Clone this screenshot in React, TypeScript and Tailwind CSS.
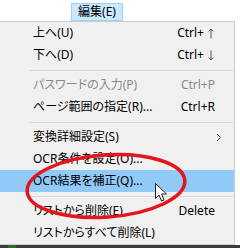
import React from "react";

type Item =
  | { kind: "sep" }
  | { kind: "item"; label: string; shortcut?: string; arrow?: "up" | "down"; disabled?: boolean; sub?: boolean; active?: boolean };

const items: Item[] = [
  { kind: "item", label: "上へ(U)", shortcut: "Ctrl+", arrow: "up" },
  { kind: "item", label: "下へ(D)", shortcut: "Ctrl+", arrow: "down" },
  { kind: "sep" },
  { kind: "item", label: "パスワードの入力(P)", shortcut: "Ctrl+P", disabled: true },
  { kind: "item", label: "ページ範囲の指定(R)...", shortcut: "Ctrl+R" },
  { kind: "sep" },
  { kind: "item", label: "変換詳細設定(S)", sub: true },
  { kind: "item", label: "OCR条件を設定(O)..." },
  { kind: "item", label: "OCR結果を補正(Q)...", active: true },
  { kind: "sep" },
  { kind: "item", label: "リストから削除(E)", shortcut: "Delete" },
  { kind: "item", label: "リストからすべて削除(L)" },
];

function Arrow({ dir }: { dir: "up" | "down" }) {
  return (
    <svg width="6" height="11" viewBox="0 0 6 11" className="ml-[4px] mr-[1px]">
      {dir === "up" ? (
        <path d="M3 1 L3 10.5 M0.8 3.5 L3 1 L5.2 3.5" stroke="#555" strokeWidth="1" fill="none" />
      ) : (
        <path d="M3 0.5 L3 10 M0.8 7.5 L3 10 L5.2 7.5" stroke="#555" strokeWidth="1" fill="none" />
      )}
    </svg>
  );
}

export default function App() {
  return (
    <div
      className="relative w-[240px] h-[248px] overflow-hidden bg-white text-[12px] leading-none text-black [font-feature-settings:'palt']"
      style={{ fontFamily: '"Noto Sans", "Noto Sans CJK JP", sans-serif' }}
    >
      <div className="h-[21px] flex items-start">
        <div className="ml-[71px] mt-[3px] w-[52px] h-[18px] border border-[#99d1ff] bg-[#cce8ff] flex items-center justify-center">
          編集(E)
        </div>
      </div>
      <div className="w-[235px] bg-[#f0f0f0] border-t border-r border-b border-[#cccccc] flex flex-col">
        {items.map((it, i) =>
          it.kind === "sep" ? (
            <div key={i} className="h-[8px] flex items-center">
              <div className="ml-[29px] mr-[1px] flex-1 h-px bg-[#d7d7d7]" />
            </div>
          ) : (
            <div
              key={i}
              className={
                "h-[22px] flex items-center pl-[33px] pr-[19px] " +
                (it.active ? "bg-[#91c9f7] " : "") +
                (it.disabled ? "text-[#8a8a8a]" : "text-black")
              }
            >
              <span className="flex-1 whitespace-nowrap">{it.label}</span>
              {it.shortcut && <span className="whitespace-nowrap">{it.shortcut}</span>}
              {it.arrow && <Arrow dir={it.arrow} />}
              {it.sub && (
                <svg width="6" height="9" viewBox="0 0 6 9" className="mr-[-7px]">
                  <path d="M1 1 L4.5 4.5 L1 8" stroke="#333" strokeWidth="1" fill="none" />
                </svg>
              )}
            </div>
          )
        )}
      </div>
      <div className="h-[4px] bg-[#3a3a3a] flex">
        <div className="ml-[8px] w-[8px] bg-[#2f6b2f]" />
      </div>
      <svg className="absolute left-0 top-0 pointer-events-none" width="240" height="248" viewBox="0 0 240 248">
        <ellipse
          cx="106"
          cy="186"
          rx="79"
          ry="31"
          transform="rotate(-4 106 186)"
          fill="none"
          stroke="#e3151d"
          strokeWidth="3.5"
        />
      </svg>
      <svg className="absolute left-[155px] top-[183px]" width="13" height="19" viewBox="0 0 13 19">
        <path
          d="M0.5 0.5 L0.5 15.5 L4 12 L6.5 18 L9 17 L6.5 11 L11.5 11 Z"
          fill="white"
          stroke="#222"
          strokeWidth="1"
          strokeLinejoin="miter"
        />
      </svg>
    </div>
  );
}
